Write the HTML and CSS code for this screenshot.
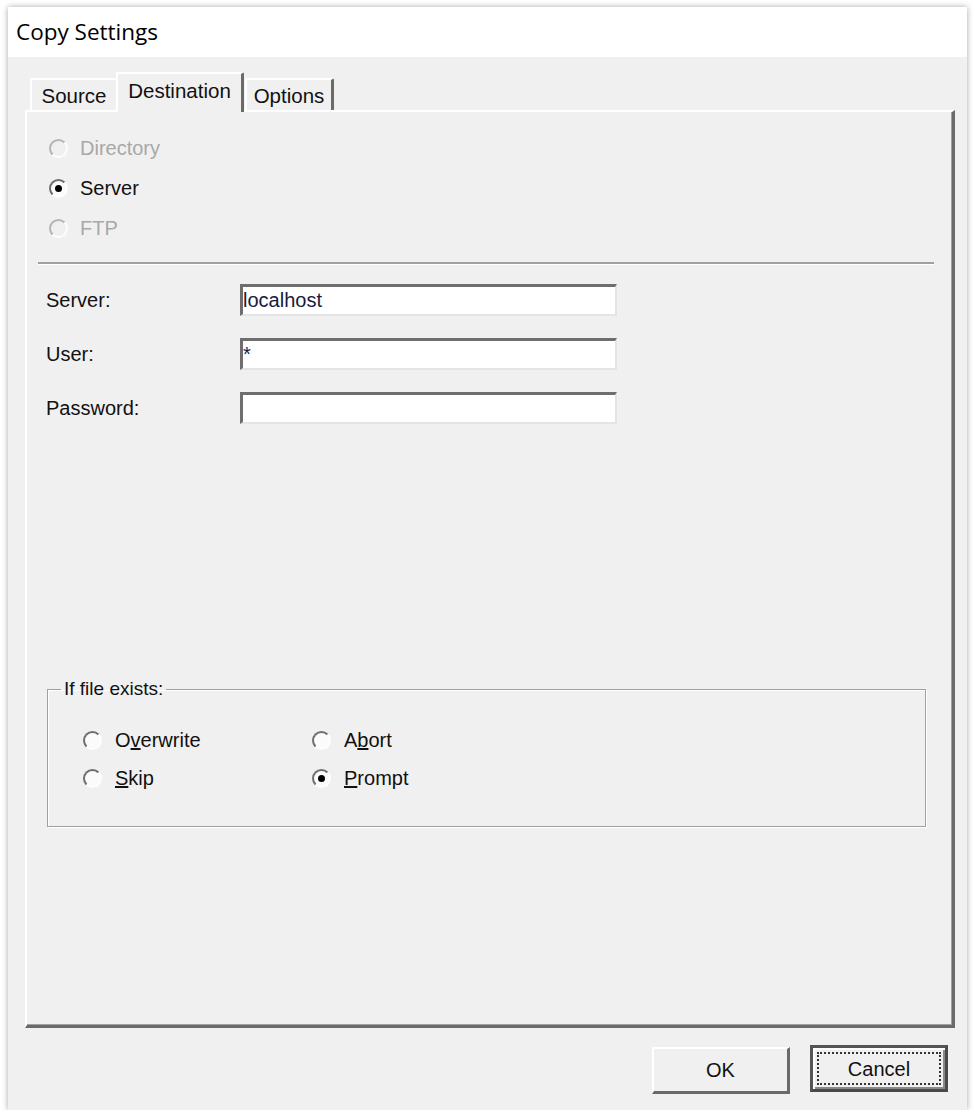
FILE: index.html
```html
<!DOCTYPE html>
<html>
<head>
  <title>Copy Settings</title>
  <link rel="stylesheet" href="styles.css">
</head>
<body>
  <div class="window">
    <div class="titlebar">Copy Settings</div>

    <div class="tabs-area">
      <div class="tab-row">
        <div class="tab tab-first">Source</div>
        <div class="tab tab-active">Destination</div>
        <div class="tab tab-last">Options</div>
      </div>

      <div class="panel">
        <div class="radio-list">
          <div class="radio-row disabled"><span class="radio"></span>Directory</div>
          <div class="radio-row"><span class="radio checked"></span>Server</div>
          <div class="radio-row disabled"><span class="radio"></span>FTP</div>
        </div>

        <div class="separator"></div>

        <div class="fields">
          <div class="field">
            <label>Server:</label>
            <div class="textbox">localhost</div>
          </div>
          <div class="field">
            <label>User:</label>
            <div class="textbox">*</div>
          </div>
          <div class="field">
            <label>Password:</label>
            <div class="textbox"></div>
          </div>
        </div>

        <fieldset class="group">
          <legend>If file exists:</legend>
          <div class="group-grid">
            <div class="radio-row"><span class="radio"></span>O<u>v</u>erwrite</div>
            <div class="radio-row"><span class="radio"></span>A<u>b</u>ort</div>
            <div class="radio-row"><span class="radio"></span><u>S</u>kip</div>
            <div class="radio-row"><span class="radio checked"></span><u>P</u>rompt</div>
          </div>
        </fieldset>
      </div>
    </div>

    <div class="buttons">
      <button class="btn">OK</button>
      <button class="btn btn-default"><span class="focus">Cancel</span></button>
    </div>
  </div>
</body>
</html>
```

FILE: styles.css
```css
body {
  margin: 0;
  background-color: #fff;
  font-family: "Liberation Sans", Arial, sans-serif;
  color: #111;
}
.window {
  margin: 7px 0 0 8px;
  width: 959px;
  height: 1103px;
  background-color: #f0f0f0;
  box-shadow: 0 0 6px rgba(0, 0, 0, 0.35);
  display: flex;
  flex-direction: column;
}
.titlebar {
  height: 50px;
  line-height: 50px;
  padding-left: 8px;
  background-color: #fff;
  font-family: "Open Sans", "Noto Sans", sans-serif;
  font-size: 22.5px;
  color: #000;
}
.tabs-area {
  margin: 15px 12px 0 17px;
}
.tab-row {
  display: flex;
  align-items: flex-end;
  padding-left: 5px;
  height: 38px;
  position: relative;
  z-index: 1;
}
.tab {
  font-size: 20.5px;
  box-sizing: border-box;
  height: 32px;
  padding: 4px 0 0 0;
  text-align: center;
  border-top: 2px solid #fff;
  border-left: 2px solid #fff;
  border-right: 3px solid #6a6a6a;
  border-top-left-radius: 2px;
  border-top-right-radius: 2px;
  background-color: #f0f0f0;
}
.tab-first {
  width: 86px;
  border-right: none;
}
.tab-active {
  width: 128px;
  height: 40px;
  margin-bottom: -2px;
  padding-top: 5px;
}
.tab-last {
  width: 89px;
  margin-left: 1px;
}
.panel {
  height: 918px;
  box-sizing: border-box;
  border-top: 2px solid #fff;
  border-left: 2px solid #fff;
  border-right: 3px solid #6a6a6a;
  border-bottom: 3px solid #6a6a6a;
  box-shadow: inset -1px -1px 0 #a0a0a0;
  padding-top: 16px;
}
.radio-list {
  padding-left: 22px;
}
.radio-row {
  display: flex;
  align-items: center;
  height: 40px;
  font-size: 20px;
  color: #111;
}
.radio-row.disabled {
  color: #a8a8a8;
}
.radio {
  box-sizing: border-box;
  width: 19px;
  height: 19px;
  border-radius: 50%;
  border: 2px solid;
  border-color: #6e6e6e #fdfdfd #fdfdfd #6e6e6e;
  background-color: #fbfbfb;
  margin-right: 12px;
  display: flex;
  align-items: center;
  justify-content: center;
}
.disabled .radio {
  border-color: #b4b4b4 #fdfdfd #fdfdfd #b4b4b4;
  background-color: #f0f0f0;
}
.radio.checked::after {
  content: "";
  width: 7px;
  height: 7px;
  border-radius: 50%;
  background-color: #000;
}
.separator {
  margin: 14px 18px 0 11px;
  border-top: 2px solid #a0a0a0;
  border-bottom: 1px solid #fff;
}
.fields {
  padding: 19px 0 0 19px;
  display: flex;
  flex-direction: column;
  gap: 22px;
}
.field {
  display: flex;
  align-items: center;
}
.field label {
  width: 194px;
  font-size: 20px;
  color: #111;
}
.textbox {
  box-sizing: border-box;
  width: 377px;
  height: 32px;
  border-top: 3px solid #6e6e6e;
  border-left: 3px solid #6e6e6e;
  border-right: 2px solid #e4e4e4;
  border-bottom: 2px solid #e4e4e4;
  background-color: #fff;
  padding: 1px 0 0 0;
  font-size: 20px;
  color: #1a1a40;
  line-height: 24px;
}
.group {
  margin: 254px 26px 0 20px;
  padding: 21px 0 29px 35px;
  border: 1px solid #a0a0a0;
  box-shadow: inset 1px 1px 0 #fff, 1px 1px 0 #fff;
  min-width: 0;
}
.group legend {
  font-size: 19px;
  padding: 0 3px;
  margin-left: -22px;
  color: #111;
}
.group-grid {
  display: grid;
  grid-template-columns: 229px 229px;
}
.group-grid .radio-row {
  height: 38px;
}
.group-grid .radio {
  margin-right: 13px;
}
.buttons {
  display: flex;
  justify-content: flex-end;
  gap: 20px;
  padding: 19px 19px 0 0;
}
.btn {
  box-sizing: border-box;
  width: 138px;
  height: 47px;
  font-family: "Liberation Sans", Arial, sans-serif;
  font-size: 20px;
  color: #111;
  background-color: #f0f0f0;
  border-top: 2px solid #fff;
  border-left: 2px solid #fff;
  border-right: 3px solid #6a6a6a;
  border-bottom: 3px solid #6a6a6a;
  padding: 0;
}
.btn-default {
  border: 3px solid #555;
  border-right-color: #4a4a4a;
  border-bottom-color: #4a4a4a;
  box-shadow: inset 2px 2px 0 #fff, inset -2px -2px 0 #8a8a8a;
  margin-top: -2px;
  padding: 4px;
}
.focus {
  display: block;
  height: 100%;
  box-sizing: border-box;
  border: 2px dotted #333;
  line-height: 31px;
}
```
